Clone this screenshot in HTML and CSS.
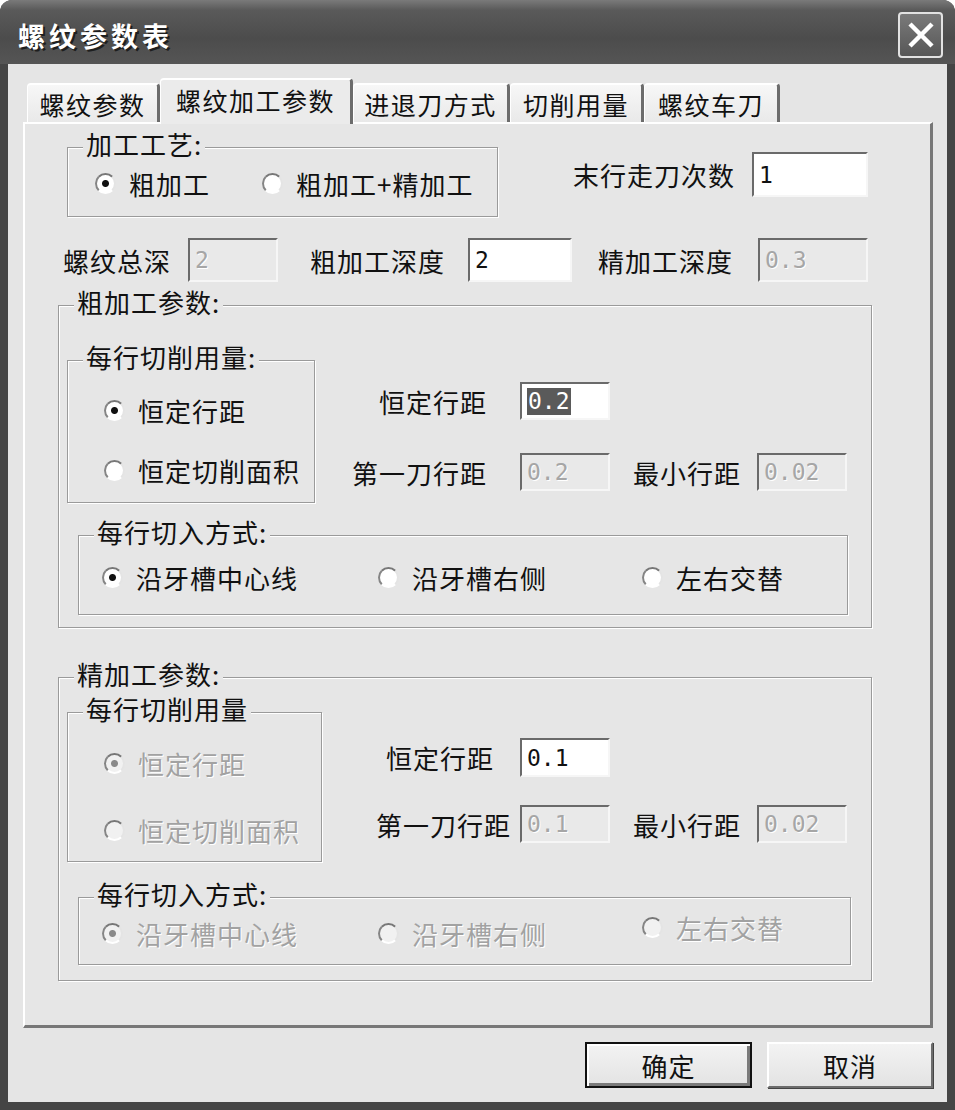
FILE: index.html
```html
<!DOCTYPE html>
<html lang="zh-CN">
    <head>
        <meta charset="utf-8">
        <link rel="stylesheet" href="styles.css">
    </head>
    <body>
        <div class="window">
            <div class="titlebar">
                <span class="title">螺纹参数表</span>
                <span class="close">
                    <svg width="28" height="26" viewBox="0 0 28 26"><path d="M3 2 L25 24 M25 2 L3 24" stroke="#fff" stroke-width="4.5"/></svg>
                </span>
            </div>
            <div class="client">
                <div class="tabs">
                    <div class="tab t1">螺纹参数</div>
                    <div class="tab t2 active">螺纹加工参数</div>
                    <div class="tab t3">进退刀方式</div>
                    <div class="tab t4">切削用量</div>
                    <div class="tab t5">螺纹车刀</div>
                </div>
                <div class="panel">
                    <div class="row row1">
                        <div class="group g-process">
                            <span class="legend">加工工艺:</span>
                            <div class="radios">
                                <label class="opt w167"><span class="radio on"></span>粗加工</label>
                                <label class="opt"><span class="radio"></span>粗加工+精加工</label>
                            </div>
                        </div>
                        <div class="field f-passes">
                            <span class="lbl">末行走刀次数</span>
                            <span class="edit">1</span>
                        </div>
                    </div>

                    <div class="row row2">
                        <span class="lbl w125">螺纹总深</span>
                        <span class="edit dis w90">2</span>
                        <span class="lbl w158 ml32">粗加工深度</span>
                        <span class="edit w104">2</span>
                        <span class="lbl w160 ml26">精加工深度</span>
                        <span class="edit dis w110">0.3</span>
                    </div>

                    <div class="group g-big g-rough">
                        <span class="legend">粗加工参数:</span>
                        <div class="sub">
                            <div class="group g-cut g-cut-rough">
                                <span class="legend">每行切削用量:</span>
                                <div class="stack">
                                    <label class="opt"><span class="radio on"></span>恒定行距</label>
                                    <label class="opt"><span class="radio"></span>恒定切削面积</label>
                                </div>
                            </div>
                            <div class="params p-rough">
                                <span class="lbl r">恒定行距</span>
                                <span class="edit"><span class="sel">0.2</span></span>
                                <span></span>
                                <span></span>
                                <span class="lbl r">第一刀行距</span>
                                <span class="edit dis">0.2</span>
                                <span class="lbl l">最小行距</span>
                                <span class="edit dis">0.02</span>
                            </div>
                        </div>
                        <div class="group g-feed g-feed-rough">
                            <span class="legend">每行切入方式:</span>
                            <div class="radios">
                                <label class="opt w276"><span class="radio on"></span>沿牙槽中心线</label>
                                <label class="opt w264"><span class="radio"></span>沿牙槽右侧</label>
                                <label class="opt"><span class="radio"></span>左右交替</label>
                            </div>
                        </div>
                    </div>

                    <div class="group g-big g-fine">
                        <span class="legend">精加工参数:</span>
                        <div class="sub">
                            <div class="group g-cut g-cut-fine">
                                <span class="legend">每行切削用量</span>
                                <div class="stack off">
                                    <label class="opt"><span class="radio on"></span>恒定行距</label>
                                    <label class="opt"><span class="radio"></span>恒定切削面积</label>
                                </div>
                            </div>
                            <div class="params p-fine">
                                <span class="lbl r r27">恒定行距</span>
                                <span class="edit">0.1</span>
                                <span></span>
                                <span></span>
                                <span class="lbl r r10">第一刀行距</span>
                                <span class="edit dis">0.1</span>
                                <span class="lbl l">最小行距</span>
                                <span class="edit dis">0.02</span>
                            </div>
                        </div>
                        <div class="group g-feed g-feed-fine">
                            <span class="legend">每行切入方式:</span>
                            <div class="radios off">
                                <label class="opt w276"><span class="radio on"></span>沿牙槽中心线</label>
                                <label class="opt w264"><span class="radio"></span>沿牙槽右侧</label>
                                <label class="opt up"><span class="radio"></span>左右交替</label>
                            </div>
                        </div>
                    </div>
                </div>
                <div class="buttons">
                    <div class="btn default">确定</div>
                    <div class="btn cancel">取消</div>
                </div>
            </div>
        </div>
    </body>
</html>
```

FILE: styles.css
```css
*{
    box-sizing: border-box;
}
body{
    margin: 0;
    width: 955px;
    height: 1110px;
    background: #fff;
    font-family: "Noto Sans CJK SC", "Noto Sans", sans-serif;
    font-size: 26px;
    letter-spacing: 1px;
    color: #111;
}
.window{
    width: 955px;
    height: 1110px;
    padding: 0 8px 8px 8px;
    background: #454545;
    border-radius: 12px 12px 0 0;
    display: flex;
    flex-direction: column;
}
.titlebar{
    height: 64px;
    margin: 0 -8px;
    padding: 6px 12px 0 18px;
    display: flex;
    align-items: center;
    justify-content: space-between;
    background: linear-gradient(#7a7a7a, #5a5a5a 10px, #4c4c4c 60%, #555);
    border-radius: 12px 12px 0 0;
}
.title{
    color: #fff;
    font-weight: bold;
    font-size: 27px;
    letter-spacing: 4px;
    text-shadow: 2px 2px 0 #1e1e1e;
}
.close{
    width: 45px;
    height: 46px;
    border: 2px solid #e2e2e2;
    border-radius: 4px;
    background: linear-gradient(#7a7a7a, #575757);
    display: flex;
    align-items: center;
    justify-content: center;
}
.client{
    flex: 1;
    background: #e5e5e5;
    display: flex;
    flex-direction: column;
}

/* tabs */
.tabs{
    height: 58px;
    padding-left: 19px;
    display: flex;
    align-items: flex-end;
}
.tab{
    height: 39px;
    display: flex;
    align-items: center;
    justify-content: center;
    font-size: 25px;
    letter-spacing: 1.5px;
    background: linear-gradient(#f7f7f7, #e9e9e9);
    border-top: 2px solid #fff;
    border-left: 1px solid #fff;
    border-right: 3px solid #6c6c6c;
    border-radius: 4px 4px 0 0;
}
.tab.active{
    height: 46px;
    margin-bottom: -2px;
    padding-bottom: 5px;
    position: relative;
    z-index: 1;
    background: #ebebeb;
}
.t1{ width: 133px; }
.t2{ width: 193px; }
.t3{ width: 157px; }
.t4{ width: 134px; }
.t5{ width: 136px; }

.panel{
    height: 906px;
    margin: 0 14px 0 15px;
    background: #e6e6e6;
    border-top: 2px solid #fff;
    border-left: 2px solid #fff;
    border-right: 3px solid #777;
    border-bottom: 3px solid #777;
}

/* group boxes */
.group{
    position: relative;
    border: 1px solid #9a9a9a;
    box-shadow: 1px 1px 0 #fff, inset 1px 1px 0 #fff;
}
.legend{
    position: absolute;
    top: -19px;
    left: 15px;
    padding: 0 3px;
    line-height: 30px;
    background: #e6e6e6;
    white-space: nowrap;
}

/* radios */
.radios{
    display: flex;
    align-items: flex-start;
}
.stack{
    display: flex;
    flex-direction: column;
    padding-left: 36px;
}
.opt{
    height: 28px;
    display: flex;
    align-items: center;
    white-space: nowrap;
}
.radio{
    flex: none;
    width: 21px;
    height: 21px;
    margin-right: 13px;
    border-radius: 50%;
    background: #fff;
    border: 2px solid;
    border-color: #777 #e4e4e4 #fff #858585;
}
.radio.on{
    background: radial-gradient(circle, #111 3px, #fff 4px);
}
.off .opt{
    color: #a2a2a2;
    text-shadow: 1px 1px 0 #fff;
}
.off .radio{
    background: #f1f1f1;
}
.off .radio.on{
    background: radial-gradient(circle, #8a8a8a 3px, #f1f1f1 4px);
}
.opt.up{
    margin-top: -6px;
}

/* labels and edit boxes */
.row{
    display: flex;
    align-items: flex-start;
}
.field{
    display: flex;
    align-items: center;
}
.lbl{
    white-space: nowrap;
}
.edit{
    display: flex;
    align-items: center;
    padding-left: 5px;
    background: #fff;
    border-top: 2px solid #6a6a6a;
    border-left: 2px solid #6a6a6a;
    border-right: 2px solid #f6f6f6;
    border-bottom: 2px solid #f6f6f6;
    font-family: "DejaVu Sans Mono", "Liberation Mono", monospace;
    font-size: 23px;
    letter-spacing: 0;
    white-space: pre;
}
.edit.dis{
    background: #e9e9e9;
    color: #a6a6a6;
    text-shadow: 1px 1px 0 #fff;
}
.sel{
    background: #5a5a5a;
    color: #fff;
    padding: 0 1px;
    line-height: 27px;
}

.row1{
    margin-top: 23px;
}
.g-process{
    margin-left: 42px;
    width: 431px;
    height: 70px;
}
.g-process .radios{
    margin-top: 21px;
    padding-left: 27px;
}
.w167{ width: 167px; }
.w276{ width: 276px; }
.w264{ width: 264px; }
.f-passes{
    margin-left: 75px;
    margin-top: 5px;
}
.f-passes .lbl{
    width: 179px;
}
.f-passes .edit{
    width: 116px;
    height: 45px;
}

.row2{
    margin-top: 21px;
    margin-left: 38px;
    align-items: center;
}
.row2 .edit{
    height: 44px;
}
.w125{ width: 125px; }
.w158{ width: 158px; }
.w160{ width: 160px; }
.w90{ width: 90px; }
.w104{ width: 104px; }
.w110{ width: 110px; }
.ml32{ margin-left: 32px; }
.ml26{ margin-left: 26px; }

/* rough / fine parameter groups */
.g-big{
    margin-left: 33px;
    width: 814px;
}
.g-rough{
    margin-top: 23px;
    height: 323px;
}
.g-fine{
    margin-top: 49px;
    height: 304px;
}
.sub{
    display: flex;
    align-items: flex-start;
}
.g-rough .sub{
    margin-top: 54px;
}
.g-fine .sub{
    margin-top: 34px;
}
.g-cut{
    margin-left: 8px;
}
.g-cut-rough{
    width: 248px;
    height: 143px;
}
.g-cut-rough .stack{
    padding-top: 35px;
    gap: 32px;
}
.g-cut-fine{
    width: 255px;
    height: 150px;
}
.g-cut-fine .stack{
    padding-top: 36px;
    gap: 39px;
}
.params{
    display: grid;
    align-items: center;
}
.params .edit{
    height: 100%;
}
.p-rough{
    margin-top: 22px;
    grid-template-columns: 205px 90px 147px 90px;
    grid-template-rows: 38px 38px;
    row-gap: 33px;
}
.p-fine{
    margin-top: 26px;
    grid-template-columns: 198px 90px 147px 90px;
    grid-template-rows: 39px 38px;
    row-gap: 28px;
}
.lbl.r{
    text-align: right;
    padding-right: 33px;
}
.lbl.r27{ padding-right: 26px; }
.lbl.r10{ padding-right: 9px; }
.lbl.l{
    padding-left: 23px;
}
.g-feed{
    margin-left: 19px;
}
.g-feed .radios{
    padding-left: 23px;
}
.g-feed-rough{
    margin-top: 32px;
    width: 770px;
    height: 80px;
}
.g-feed-rough .radios{
    margin-top: 27px;
}
.g-feed-fine{
    margin-top: 35px;
    width: 773px;
    height: 68px;
}
.g-feed-fine .radios{
    margin-top: 21px;
}

/* dialog buttons */
.buttons{
    display: flex;
    justify-content: flex-end;
    gap: 15px;
    padding-right: 14px;
    margin-top: 14px;
}
.btn{
    height: 46px;
    display: flex;
    align-items: center;
    justify-content: center;
    background: linear-gradient(#f3f3f3, #e3e3e3);
}
.btn.default{
    width: 167px;
    border: 2px solid #111;
    box-shadow: inset 2px 2px 0 #fff, inset -3px -3px 0 #7a7a7a;
}
.btn.cancel{
    width: 166px;
    border: 2px solid;
    border-color: #fff #6c6c6c #6c6c6c #fff;
    box-shadow: 1px 1px 0 #444;
}
```
